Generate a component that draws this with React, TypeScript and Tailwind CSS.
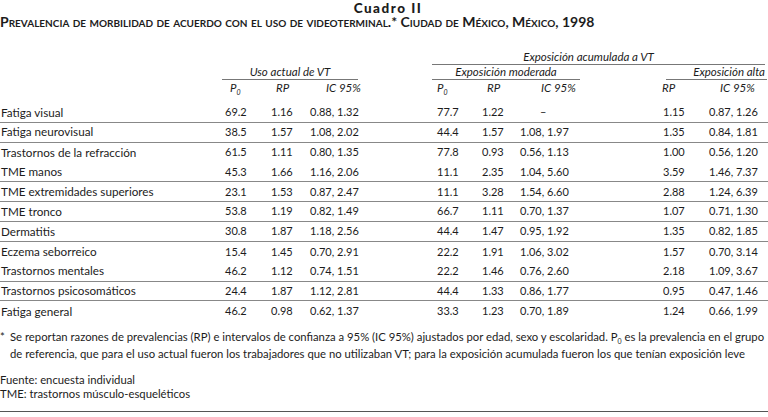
import React from "react";

type Row = {
  label: string;
  p0: string;
  rp: string;
  ic: string;
  p0m: string;
  rpm: string;
  icm: string;
  rpa: string;
  ica: string;
  line?: boolean;
};

const rows: Row[] = [
  { label: "Fatiga visual", p0: "69.2", rp: "1.16", ic: "0.88, 1.32", p0m: "77.7", rpm: "1.22", icm: "–", rpa: "1.15", ica: "0.87, 1.26", line: true },
  { label: "Fatiga neurovisual", p0: "38.5", rp: "1.57", ic: "1.08, 2.02", p0m: "44.4", rpm: "1.57", icm: "1.08, 1.97", rpa: "1.35", ica: "0.84, 1.81", line: true },
  { label: "Trastornos de la refracción", p0: "61.5", rp: "1.11", ic: "0.80, 1.35", p0m: "77.8", rpm: "0.93", icm: "0.56, 1.13", rpa: "1.00", ica: "0.56, 1.20" },
  { label: "TME manos", p0: "45.3", rp: "1.66", ic: "1.16, 2.06", p0m: "11.1", rpm: "2.35", icm: "1.04, 5.60", rpa: "3.59", ica: "1.46, 7.37", line: true },
  { label: "TME extremidades superiores", p0: "23.1", rp: "1.53", ic: "0.87, 2.47", p0m: "11.1", rpm: "3.28", icm: "1.54, 6.60", rpa: "2.88", ica: "1.24, 6.39", line: true },
  { label: "TME tronco", p0: "53.8", rp: "1.19", ic: "0.82, 1.49", p0m: "66.7", rpm: "1.11", icm: "0.70, 1.37", rpa: "1.07", ica: "0.71, 1.30", line: true },
  { label: "Dermatitis", p0: "30.8", rp: "1.87", ic: "1.18, 2.56", p0m: "44.4", rpm: "1.47", icm: "0.95, 1.92", rpa: "1.35", ica: "0.82, 1.85", line: true },
  { label: "Eczema seborreico", p0: "15.4", rp: "1.45", ic: "0.70, 2.91", p0m: "22.2", rpm: "1.91", icm: "1.06, 3.02", rpa: "1.57", ica: "0.70, 3.14" },
  { label: "Trastornos mentales", p0: "46.2", rp: "1.12", ic: "0.74, 1.51", p0m: "22.2", rpm: "1.46", icm: "0.76, 2.60", rpa: "2.18", ica: "1.09, 3.67", line: true },
  { label: "Trastornos psicosomáticos", p0: "24.4", rp: "1.87", ic: "1.12, 2.81", p0m: "44.4", rpm: "1.33", icm: "0.86, 1.77", rpa: "0.95", ica: "0.47, 1.46", line: true },
  { label: "Fatiga general", p0: "46.2", rp: "0.98", ic: "0.62, 1.37", p0m: "33.3", rpm: "1.23", icm: "0.70, 1.89", rpa: "1.24", ica: "0.66, 1.99" },
];

function P0() {
  return (
    <span>
      P<span className="relative top-[3px] text-[7px]">0</span>
    </span>
  );
}

export default function App() {
  return (
    <div className="flex flex-col w-[768px] h-[417px] bg-white text-[#1c1c1c] font-['Lato',sans-serif] text-[11px] overflow-hidden">
      <div className="pt-[2px] text-center text-[13.5px] leading-[13px] font-black tracking-[1.5px] pl-[8px]">Cuadro II</div>
      <div className="text-[14px] leading-[13px] font-bold [font-variant:small-caps] whitespace-nowrap">
        Prevalencia de morbilidad de acuerdo con el uso de videoterminal.* Ciudad de México, México, 1998
      </div>

      {/* column group headers */}
      <div className="mt-[22px] flex h-[15px] leading-[14px] italic text-[11.5px]">
        <div className="w-[432px]" />
        <div className="w-[333px] border-b border-[#777] text-center pr-[20px]">Exposición acumulada a VT</div>
      </div>
      <div className="flex h-[15px] leading-[14px] italic text-[11.5px]">
        <div className="w-[222px]" />
        <div className="w-[136px] border-b border-[#777] text-center">Uso actual de VT</div>
        <div className="w-[74px]" />
        <div className="w-[148px] border-b border-[#777] text-center">Exposición moderada</div>
        <div className="w-[86px]" />
        <div className="w-[101px] border-b border-[#777] text-right pr-[2px]">Exposición alta</div>
      </div>
      <div className="flex h-[16px] leading-[15px] italic text-[11.5px]">
        <div className="w-[230px]" />
        <div className="w-[46px]"><P0 /></div>
        <div className="w-[50px]">RP</div>
        <div className="w-[111px]">IC 95%</div>
        <div className="w-[46px]"><P0 /></div>
        <div className="w-[58px] pl-[4px]">RP</div>
        <div className="w-[121px]">IC 95%</div>
        <div className="w-[58px]">RP</div>
        <div className="w-[48px]">IC 95%</div>
      </div>

      <div className="mt-[7px]">
        {rows.map((r) => (
          <div
            key={r.label}
            className={`grid grid-cols-[225px_46px_39px_127px_45px_38px_143px_46px_59px] h-[19.85px] items-center ${r.line ? "border-b border-[#888]" : ""}`}
          >
            <div className="pl-[1px] text-[11.7px]">{r.label}</div>
            <div>{r.p0}</div>
            <div>{r.rp}</div>
            <div>{r.ic}</div>
            <div>{r.p0m}</div>
            <div>{r.rpm}</div>
            <div className={r.icm === "–" ? "pl-[20px]" : ""}>{r.icm}</div>
            <div>{r.rpa}</div>
            <div>{r.ica}</div>
          </div>
        ))}
      </div>

      <div className="mt-[8px] flex leading-[15px] text-[11.3px] whitespace-nowrap">
        <div className="w-[10px] shrink-0">*</div>
        <div>
          Se reportan razones de prevalencias (RP) e intervalos de confianza a 95% (IC 95%) ajustados por edad, sexo y escolaridad. P
          <span className="relative top-[3px] text-[7px]">0</span> es la prevalencia en el grupo
          <br />
          de referencia, que para el uso actual fueron los trabajadores que no utilizaban VT; para la exposición acumulada fueron los que tenían exposición leve
        </div>
      </div>
      <div className="mt-[12px] leading-[14px] text-[11.3px]">
        <div>Fuente: encuesta individual</div>
        <div>TME: trastornos músculo-esqueléticos</div>
      </div>
      <div className="mt-[10px] h-px shrink-0 bg-[#555]" />
    </div>
  );
}
